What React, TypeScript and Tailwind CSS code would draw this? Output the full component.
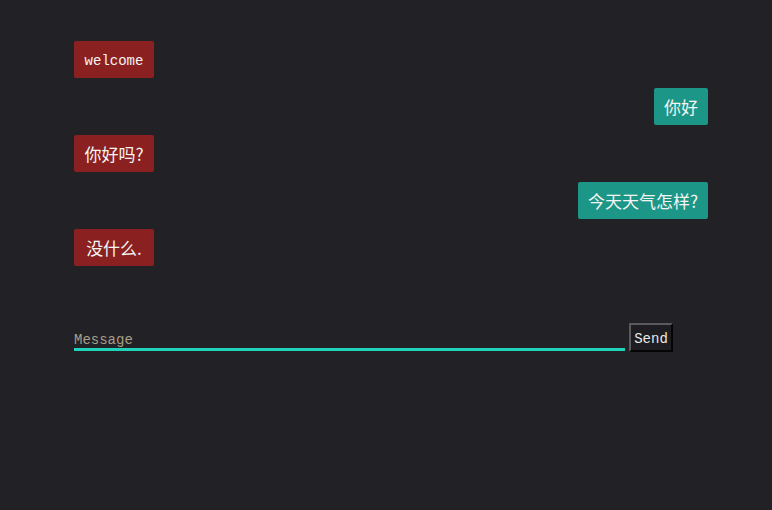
import React from "react";

const msgs: { text: string; me: boolean; mono?: boolean }[] = [
  { text: "welcome", me: false, mono: true },
  { text: "你好", me: true },
  { text: "你好吗?", me: false },
  { text: "今天天气怎样?", me: true },
  { text: "没什么.", me: false },
];

export default function App() {
  return (
    <div className="w-[772px] h-[510px] bg-[#212126] pt-[41px] pl-[74px] pr-[64px]">
      <div className="flex flex-col gap-[10px]">
        {msgs.map((m, i) => (
          <div key={i} className={m.me ? "flex justify-end" : "flex justify-start"}>
            <div
              className={
                (m.me ? "bg-[#1c9686] " : "bg-[#8a2120] min-w-[80px] ") +
                "h-[37px] px-[10px] rounded-[2px] flex items-center justify-center text-[#f4f4f4] " +
                (m.mono
                  ? "text-[14px] pt-[4px] [font-family:'Liberation_Mono',monospace]"
                  : "text-[17px] [font-family:'Noto_Sans_CJK_SC',sans-serif]")
              }
            >
              {m.text}
            </div>
          </div>
        ))}
      </div>
      <div className="mt-[57px] flex items-end gap-[4px]">
        <div className="w-[551px] h-[28px] mb-[1px] border-b-[3px] border-[#1ed3b9] flex items-end">
          <input
            placeholder="Message"
            className="w-full bg-transparent outline-none text-[14px] leading-[16px] text-[#e0e0e0] placeholder:text-[#a89e88] [font-family:'Liberation_Mono',monospace]"
          />
        </div>
        <button className="w-[44px] h-[29px] pt-[3px] bg-[#1e1e22] border-2 [border-style:outset] border-[#5a5a5a] text-[14px] text-[#e8e8e8] [font-family:'Liberation_Mono',monospace] flex items-center justify-center">
          Send
        </button>
      </div>
    </div>
  );
}
